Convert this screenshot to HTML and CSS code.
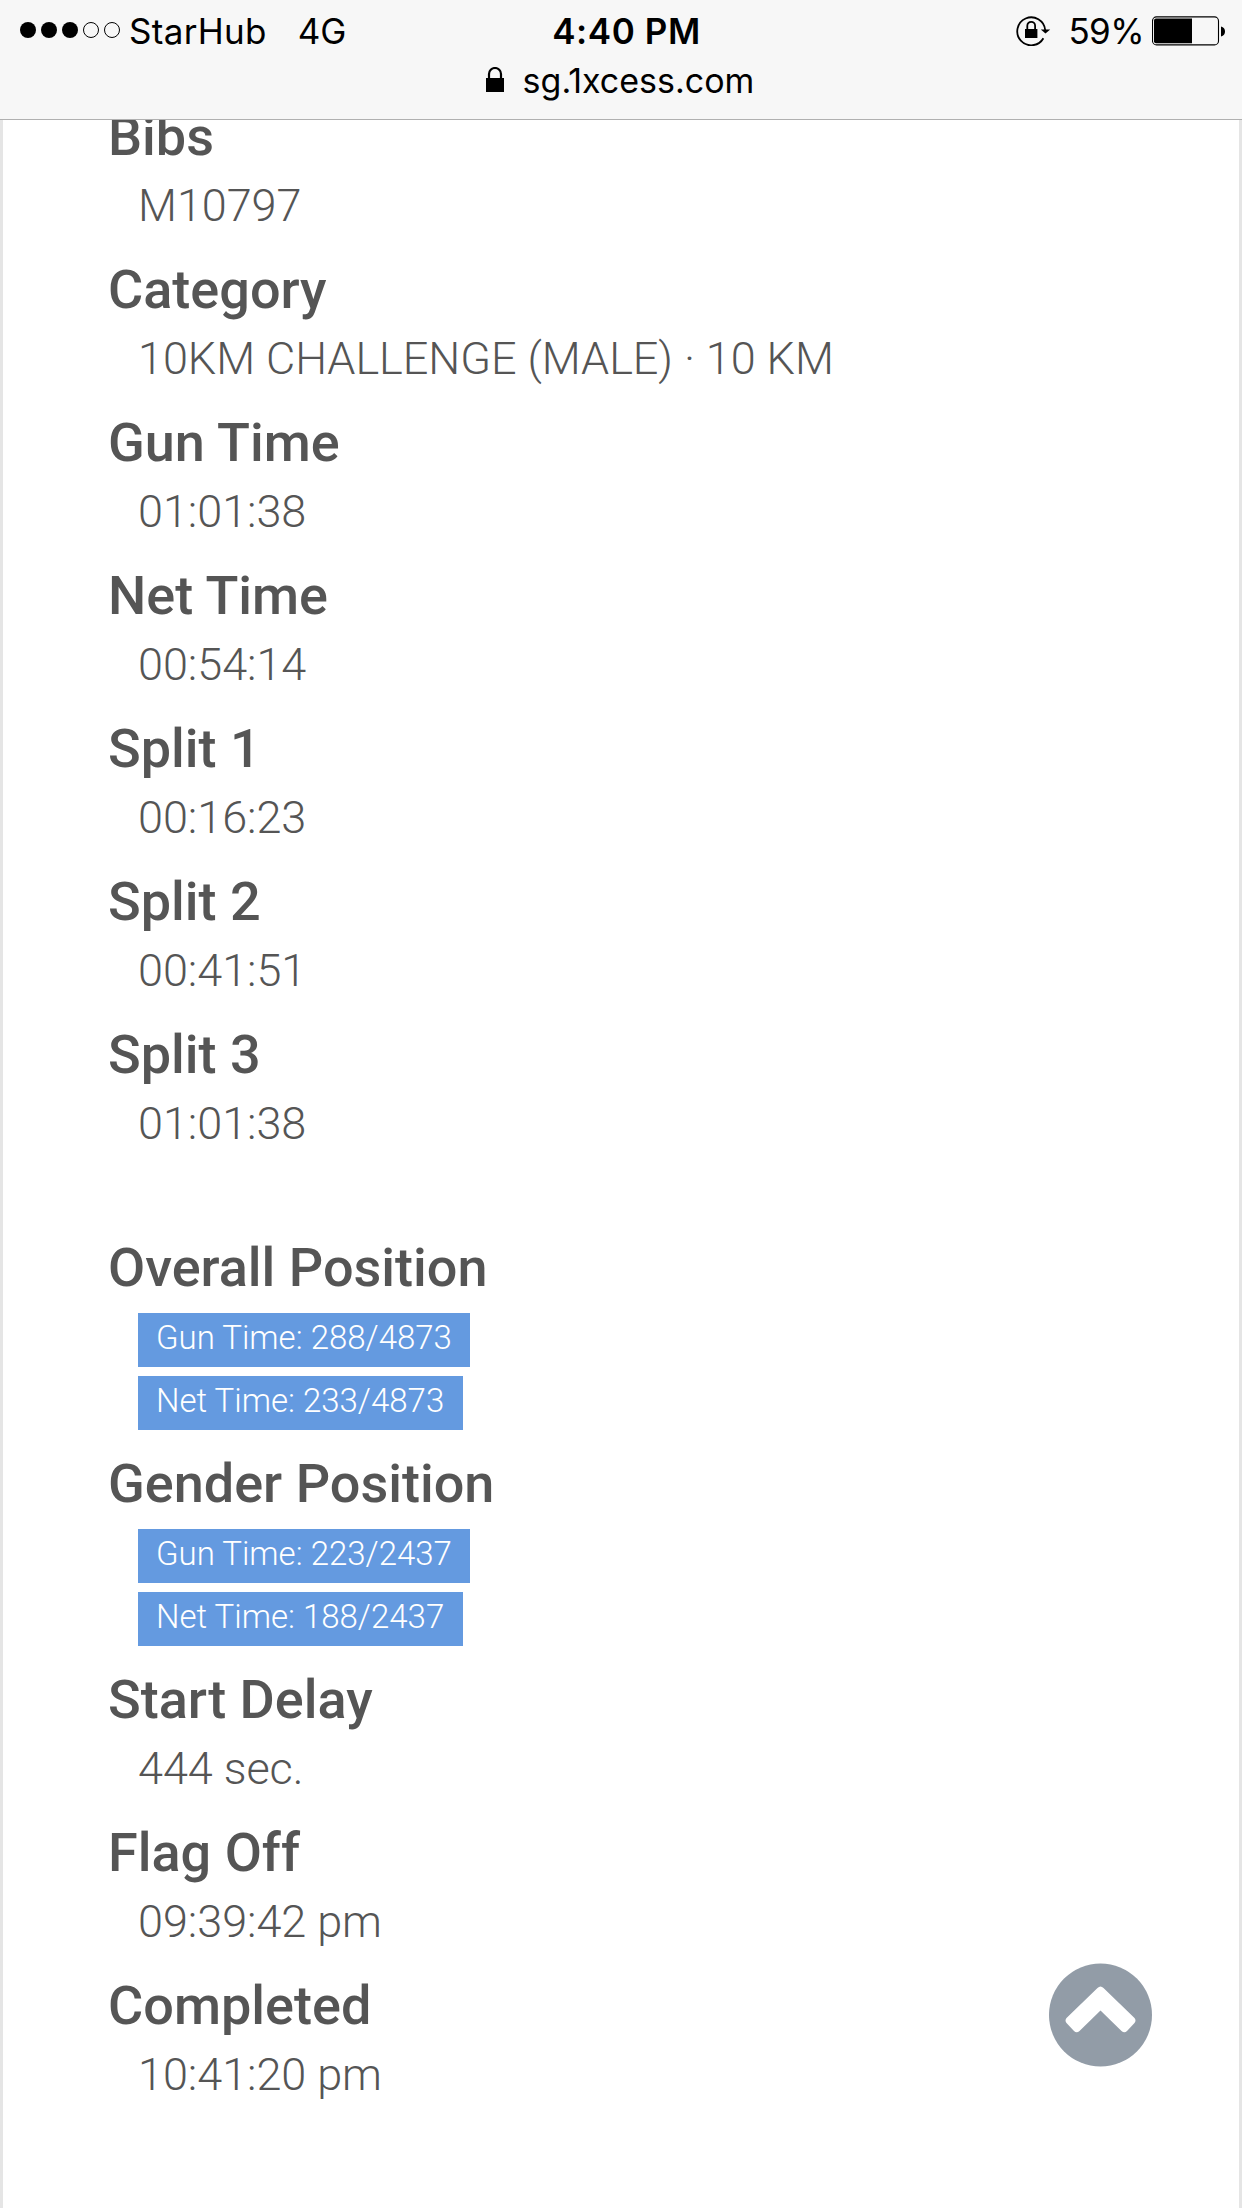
FILE: index.html
```
<!DOCTYPE html>
<html lang="en">
<head>
<meta charset="utf-8">
<title>Race result</title>
<link rel="stylesheet" href="styles.css">
</head>
<body>
<header class="browser-bar">
  <div class="status">
    <div class="status-left">
      <svg class="signal" width="102" height="18" viewBox="0 0 102 18"><g fill="#000"><circle cx="8" cy="9" r="8"/><circle cx="29" cy="9" r="8"/><circle cx="50" cy="9" r="8"/></g><g fill="none" stroke="#000"><circle cx="71" cy="9" r="7.500"/><circle cx="92" cy="9" r="7.500"/></g></svg>
      <span class="carrier">StarHub</span>
      <span class="network">4G</span>
    </div>
    <div class="clock">4:40 PM</div>
    <div class="status-right">
      <svg class="rotation" width="36" height="32" viewBox="0 0 36 32"><path d="M27.4 24.3A14 14 0 1 1 29.2 16" fill="none" stroke="#000" stroke-width="1.8"/><path d="M24.8 15.500h9.400l-4.700 4z"/><path d="M9 15h12.400v9H9z"/><path d="M11.300 15v-3.300a3.900 3.900 0 0 1 7.800 0V15" fill="none" stroke="#000" stroke-width="1.800"/></svg>
      <span class="percent">59%</span>
      <svg class="battery" width="74" height="30" viewBox="0 0 74 30"><rect x=".5" y=".9" width="66" height="28" rx="4" fill="none" stroke="#000" stroke-width="1.100"/><path d="M4 2.500h36v24.800H4q-2 0-2-2V4.500q0-2 2-2z"/><path d="M69 10.500q4 1 4 5t-4 5z"/></svg>
    </div>
  </div>
  <div class="address">
    <svg class="lock" width="18" height="26" viewBox="0 0 18 26"><path d="M0 11h18v14H0z"/><path d="M3 11V7a6 6 0 0 1 12 0v4" fill="none" stroke="#000" stroke-width="2.200"/></svg>
    <span class="host">sg.1xcess.com</span>
  </div>
</header>
<main class="page">
  <dl class="details">
    <div class="item"><dt>Bibs</dt><dd>M10797</dd></div>
    <div class="item"><dt>Category</dt><dd>10KM CHALLENGE (MALE) · 10 KM</dd></div>
    <div class="item"><dt>Gun Time</dt><dd>01:01:38</dd></div>
    <div class="item"><dt>Net Time</dt><dd>00:54:14</dd></div>
    <div class="item"><dt>Split 1</dt><dd>00:16:23</dd></div>
    <div class="item"><dt>Split 2</dt><dd>00:41:51</dd></div>
    <div class="item"><dt>Split 3</dt><dd>01:01:38</dd></div>
  </dl>
  <dl class="details">
    <div class="item"><dt>Overall Position</dt><dd class="ranks"><span class="badge">Gun Time: 288/4873</span><span class="badge">Net Time: 233/4873</span></dd></div>
    <div class="item"><dt>Gender Position</dt><dd class="ranks"><span class="badge">Gun Time: 223/2437</span><span class="badge">Net Time: 188/2437</span></dd></div>
    <div class="item"><dt>Start Delay</dt><dd>444 sec.</dd></div>
    <div class="item"><dt>Flag Off</dt><dd>09:39:42 pm</dd></div>
    <div class="item"><dt>Completed</dt><dd>10:41:20 pm</dd></div>
  </dl>
</main>
<a class="to-top" href="#" aria-label="Back to top"><svg width="103" height="104" viewBox="0.5 0 103 104"><circle cx="52" cy="52" r="51.500" fill="#929ca7"/><path d="M49 25q3-3 6 0L86 55q2 2.500 0 5L78.500 68q-2.500 2.500-5.500 0L52 47.500 31 68q-3 2.500-5.500 0L18 60q-2-2.500 0-5z" fill="#fff"/></svg></a>
</body>
</html>
```
FILE: styles.css
```
* { box-sizing: border-box; }
body { margin: 0; background: #fff; color: #555; font-family: Roboto, sans-serif; }
.browser-bar {
  position: relative;
  z-index: 1;
  height: 120px;
  background: #f7f7f7;
  border-bottom: 1px solid #b0b0b0;
  color: #000;
  font: 400 35px/44px Inter, sans-serif;
}
.status { display: grid; grid-template-columns: 1fr auto 1fr; align-items: center; height: 62px; padding: 0 16px 0 20px; }
.status-left, .status-right { display: flex; align-items: center; }
.status-right { justify-content: flex-end; }
.signal { margin: 0 7px 2px 0; }
.carrier { letter-spacing: .3px; }
.network { margin-left: 31px; }
.clock { padding-left: 7px; font-weight: 600; letter-spacing: .6px; }
.rotation { margin-bottom: 2px; }
.percent { margin: 0 8px 0 16px; letter-spacing: -.6px; }
.battery { margin-bottom: 1px; }
.address { display: flex; align-items: center; justify-content: center; gap: 19px; height: 38px; padding-right: 2px; font-size: 34px; }
.lock { margin-bottom: 2px; }
.page { height: 2088px; padding: 0 105px; border: solid #e5e5e5; border-width: 0 3px; overflow: hidden; }
.details { margin: -22px 0 0; }
.details + .details { margin-top: 60px; }
.item { padding-bottom: 15px; }
dt { font-size: 54px; font-weight: 500; line-height: 77px; }
dd { margin: 0 0 0 30px; font-size: 45px; font-weight: 300; line-height: 61px; letter-spacing: -.05px; }
.ranks { display: flex; flex-direction: column; align-items: flex-start; gap: 9px; padding-top: 7px; letter-spacing: 0; }
.badge { height: 54px; padding: 0 18.500px 0 18px; background: #649ae0; color: #fff; font-size: 33px; line-height: 49px; }
.to-top { position: fixed; top: 1963px; right: 90px; z-index: 2; }
.to-top svg { display: block; }
```
